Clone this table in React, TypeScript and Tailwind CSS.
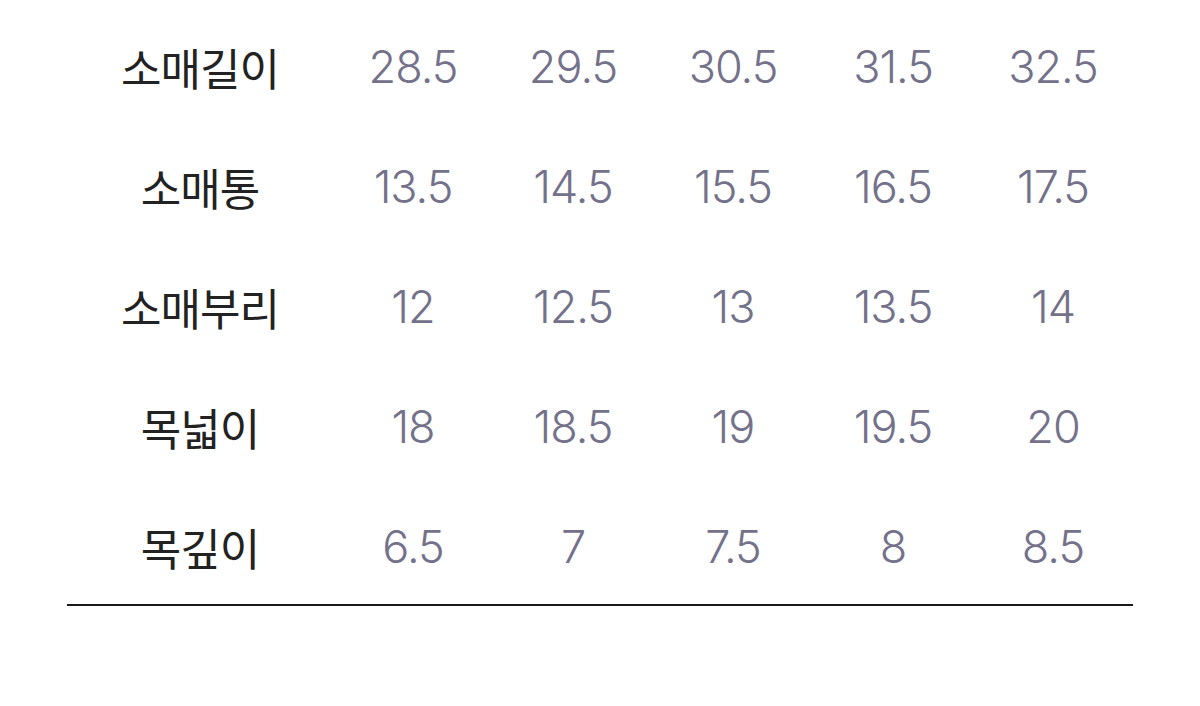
export default function App() {
  const rows: [string, string[]][] = [
    ["소매길이", ["28.5", "29.5", "30.5", "31.5", "32.5"]],
    ["소매통", ["13.5", "14.5", "15.5", "16.5", "17.5"]],
    ["소매부리", ["12", "12.5", "13", "13.5", "14"]],
    ["목넓이", ["18", "18.5", "19", "19.5", "20"]],
    ["목깊이", ["6.5", "7", "7.5", "8", "8.5"]],
  ];
  return (
    <div className="w-[1200px] h-[706px] bg-white overflow-hidden pt-[4px] px-[67px]" style={{ fontFamily: '"Noto Sans CJK KR", "Noto Sans", sans-serif' }}>
      <div className="border-b-2 border-[#1a1a1a]">
        {rows.map(([label, vals]) => (
          <div key={label} className="flex h-[120px] items-center pt-[5px]">
            <div className="w-[266px] text-center text-[44px] text-[#222222] tracking-[-1px]">{label}</div>
            {vals.map((v, i) => (
              <div key={i} className="w-[160px] text-center text-[45px] font-light text-[#74718a] tracking-[-1px]" style={{ fontFamily: 'Inter, "Noto Sans", sans-serif' }}>{v}</div>
            ))}
          </div>
        ))}
      </div>
    </div>
  );
}
